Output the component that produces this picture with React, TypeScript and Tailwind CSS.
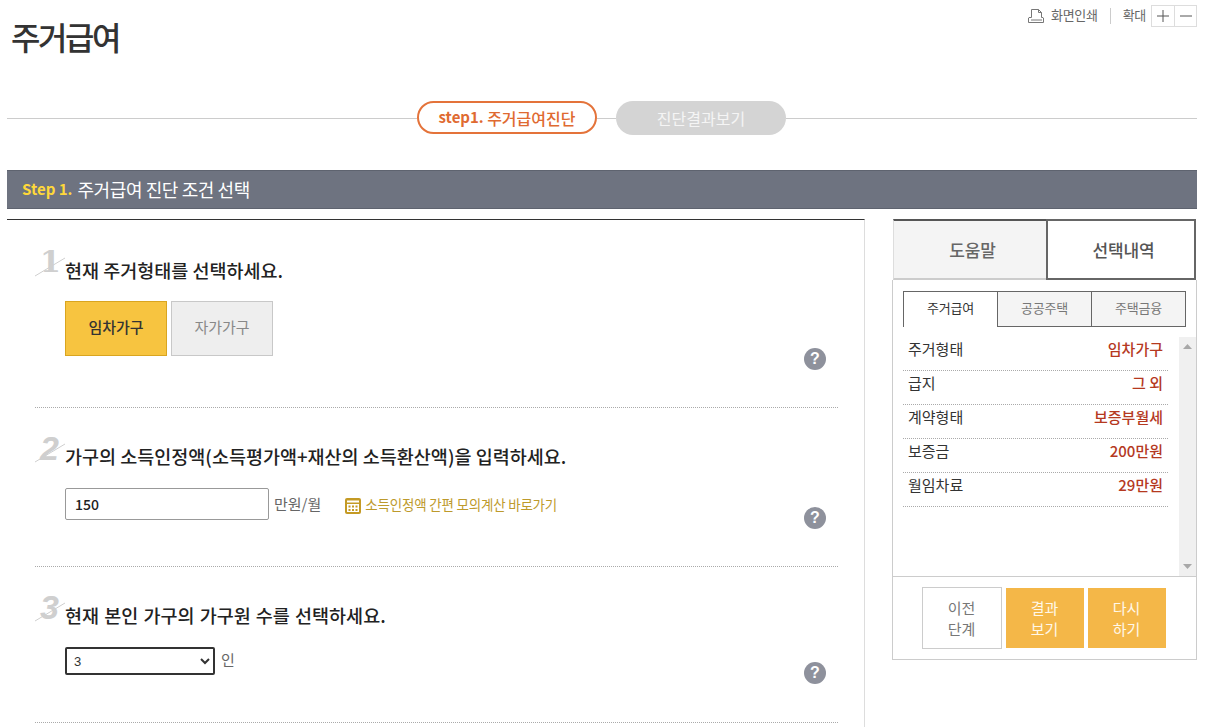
import React from 'react';

const FONT = '"Noto Sans CJK KR", "Noto Sans", sans-serif';

const HelpIcon = () => (
    <div className="w-[22px] h-[22px] rounded-full bg-[#8e919c] text-white flex items-center justify-center text-[16px] font-bold leading-none shrink-0 font-['Liberation_Sans']">
        ?
    </div>
);

const PrintIcon = () => (
    <svg width="17" height="16" viewBox="0 0 17 16" fill="none" stroke="#777" strokeWidth="1">
        <path d="M3.5 9.5V1.5H10.5L13.5 4.5V9.5" />
        <path d="M10.5 1.5V4.5H13.5" />
        <path d="M3.5 9.5H1L0.5 10V14.5H15.5V10L15 9.5H13.5" />
        <path d="M3 12H14" />
    </svg>
);

const CalcIcon = () => (
    <svg className="mt-[3px]" width="16" height="16" viewBox="0 0 16 16">
        <rect x="0" y="0" width="16" height="16" rx="2" fill="#c49a24" />
        <rect x="2" y="2.5" width="12" height="2" fill="#fff" />
        <rect x="2" y="6" width="12" height="8" fill="#fff" />
        <path d="M3.5 7.5h2v2h-2zM7 7.5h2v2H7zM10.5 7.5h2v2h-2zM3.5 11h2v2h-2zM7 11h2v2H7zM10.5 11h2v2h-2z" fill="#c49a24" />
    </svg>
);

const StepNo = ({ n, font }: { n: string; font: string }) => (
    <div className="absolute left-0 top-[-10px] w-[32px] h-[34px]">
        <span className={`absolute left-[5px] top-[-4px] leading-[38px] font-bold text-[#cfcfcf] ${font}`}>{n}</span>
        <svg className="absolute left-0 top-0" width="32" height="34" viewBox="0 0 32 34">
            <path d="M0 29L30 11" stroke="#cfcfcf" strokeWidth="1" />
        </svg>
    </div>
);

const Section = ({
    n,
    font,
    title,
    top,
    bottom,
    helpGap,
    children,
}: {
    n: string;
    font: string;
    title: string;
    top: string;
    bottom: string;
    helpGap: string;
    children: React.ReactNode;
}) => (
    <div className={`ml-[28px] mr-[26px] border-b border-dotted border-[#aaa] flex items-end ${top}`}>
        <div className={`flex-1 min-w-0 self-start ${bottom}`}>
            <div className="relative pl-[30px] text-[18.5px] leading-[26px] font-medium text-[#222]">
                <StepNo n={n} font={font} />
                {title}
            </div>
            {children}
        </div>
        <div className={`mr-[12px] ${helpGap}`}>
            <HelpIcon />
        </div>
    </div>
);

const rows = [
    ['주거형태', '임차가구'],
    ['급지', '그 외'],
    ['계약형태', '보증부월세'],
    ['보증금', '200만원'],
    ['월임차료', '29만원'],
];

export default function App() {
    return (
        <div className="w-[1226px] h-[727px] overflow-hidden bg-white pl-[7px] pr-[29px]" style={{ fontFamily: FONT }}>
            {/* top utils */}
            <div className="h-[29px] flex justify-end items-start pt-[5px] text-[13px] text-[#666]">
                <div className="flex items-center h-[22px]">
                    <PrintIcon />
                    <span className="ml-[6px] tracking-[-0.3px] mt-[-2px]">화면인쇄</span>
                    <span className="w-px h-[16px] bg-[#ccc] mx-[12px]" />
                    <span className="tracking-[-0.3px] mt-[-2px]">확대</span>
                    <div className="ml-[5px] flex border border-[#ddd] h-[22px]">
                        <div className="w-[23px] flex items-center justify-center border-r border-[#ddd]">
                            <svg width="12" height="12" viewBox="0 0 12 12" stroke="#555"><path d="M0 6H12M6 0V12" /></svg>
                        </div>
                        <div className="w-[21px] flex items-center justify-center">
                            <svg width="12" height="12" viewBox="0 0 12 12" stroke="#555"><path d="M0 6H12" /></svg>
                        </div>
                    </div>
                </div>
            </div>

            <h1 className="pl-[4px] h-[72px] text-[32px] leading-[14px] font-medium text-[#333] tracking-[-2.4px]">주거급여</h1>

            {/* steps */}
            <div className="flex items-center h-[34px] mb-[35px]">
                <div className="w-[410px] h-px bg-[#ccc]" />
                <div className="w-[180px] h-[33px] mb-px rounded-full border-2 border-[#e4733a] text-[#df6a31] flex items-center justify-center text-[15px] font-bold">
                    step1.&nbsp;<span className="text-[16px] font-medium">주거급여진단</span>
                </div>
                <div className="w-[19px] h-px bg-[#ccc]" />
                <div className="w-[170px] h-[34px] rounded-full bg-[#d4d4d4] text-[#f5f5f5] flex items-center justify-center text-[16px]">
                    진단결과보기
                </div>
                <div className="flex-1 h-px bg-[#ccc]" />
            </div>

            {/* step bar */}
            <div className="h-[39px] bg-[#6e7380] border-t border-b border-[#5e636f] flex items-center pl-[15px] text-[18px] text-white tracking-[-0.4px]">
                <span className="text-[#ffd83a] text-[15px] font-bold tracking-normal mr-[5px]">Step 1.</span>
                주거급여 진단 조건 선택
            </div>

            <div className="flex mt-[10px] items-start">
                {/* left */}
                <div className="w-[859px] h-[520px] border-t border-t-[#333] border-r border-r-[#ddd]">
                    <Section n="1" font="text-[30px] font-['DejaVu_Serif']" title="현재 주거형태를 선택하세요." top="pt-[37px]" bottom="pb-[51px]" helpGap="mb-[37px]">
                        <div className="flex gap-[4px] pl-[30px] mt-[18px] text-[15px]">
                            <div className="w-[102px] h-[55px] bg-[#f7c440] border border-[#d9a520] text-[#333] font-medium flex items-center justify-center pb-[2px]">임차가구</div>
                            <div className="w-[102px] h-[55px] bg-[#eeeeee] border border-[#c8c8c8] text-[#888] flex items-center justify-center pb-[2px]">자가가구</div>
                        </div>
                    </Section>
                    <Section n="2" font="text-[34px] italic font-['Liberation_Sans']" title="가구의 소득인정액(소득평가액+재산의 소득환산액)을 입력하세요." top="pt-[35px]" bottom="pb-[46px]" helpGap="mb-[37px]">
                        <div className="flex items-center pl-[30px] mt-[19px]">
                            <input
                                readOnly
                                value="150"
                                className="w-[204px] h-[32px] border border-[#999] rounded-[2px] px-[9px] text-[14px] font-medium text-[#222]"
                            />
                            <span className="ml-[5px] text-[15px] text-[#666]">만원/월</span>
                            <span className="ml-[24px] flex items-center gap-[4px] text-[13.5px] text-[#bd9a2c] tracking-[-0.2px]">
                                <CalcIcon />
                                소득인정액 간편 모의계산 바로가기
                            </span>
                        </div>
                    </Section>
                    <Section n="3" font="text-[34px] italic font-['Liberation_Sans']" title="현재 본인 가구의 가구원 수를 선택하세요." top="pt-[35px] [word-spacing:1px]" bottom="pb-[47px]" helpGap="mb-[38px]">
                        <div className="flex items-center pl-[30px] mt-[19px]">
                            <select
                                defaultValue="3"
                                className="w-[150px] h-[28px] border-2 border-[#333] rounded-[2px] pl-[3px] text-[13px] text-[#333] font-['Liberation_Sans']"
                            >
                                <option value="3">3</option>
                            </select>
                            <span className="ml-[6px] text-[15px] text-[#666] mt-[-2px]">인</span>
                        </div>
                    </Section>
                </div>

                {/* right */}
                <div className="ml-[27px] w-[305px]">
                    <div className="flex h-[61px] text-[17px] tracking-[-0.2px]">
                        <div className="ml-px w-[153px] bg-[#f4f4f4] border-t-2 border-t-[#555] border-b-2 border-b-[#ccc] border-l border-l-[#ddd] text-[#666] flex items-center justify-center pl-[5px] font-medium">도움말</div>
                        <div className="w-[150px] bg-white border-2 border-[#666] text-[#555] flex items-center justify-center pl-[5px] font-medium">선택내역</div>
                    </div>
                    <div className="h-[380px] border border-[#ccc] border-t-0 flex flex-col">
                        <div className="px-[10px] pt-[11px]">
                            <div className="flex h-[36px] text-[13px] tracking-[-0.2px]">
                                <div className="w-[94px] bg-white border-t border-l border-[#666] text-[#333] flex items-center justify-center pb-[3px]">주거급여</div>
                                <div className="w-[95px] bg-[#f4f4f4] border border-[#666] text-[#777] flex items-center justify-center pb-[3px]">공공주택</div>
                                <div className="w-[94px] bg-[#f4f4f4] border border-l-0 border-[#666] text-[#777] flex items-center justify-center pb-[3px]">주택금융</div>
                            </div>
                        </div>
                        <div className="flex h-[240px] mt-[10px] border-b border-[#ccc] flex-none">
                            <div className="flex-1 pl-[10px] pr-[11px]">
                                {rows.map(([k, v]) => (
                                    <div key={k} className="h-[34px] pb-[9px] border-b border-dotted border-[#aaa] flex items-center justify-between px-[5px] text-[15px]">
                                        <span className="text-[#333]">{k}</span>
                                        <span className="text-[#b5391f] font-medium">{v}</span>
                                    </div>
                                ))}
                            </div>
                            <div className="w-[17px] bg-[#f0f0f0] flex flex-col items-center justify-between py-[7px]">
                                <svg width="9" height="5" viewBox="0 0 9 5"><path d="M4.5 0L9 5H0Z" fill="#a8a8a8" /></svg>
                                <svg width="9" height="5" viewBox="0 0 9 5"><path d="M0 0H9L4.5 5Z" fill="#a8a8a8" /></svg>
                            </div>
                        </div>
                        <div className="flex justify-center gap-[4px] pt-[10px] pr-[2px] text-[15px] leading-[21px] text-center">
                            <div className="w-[80px] h-[62px] border border-[#ccc] text-[#777] flex items-center justify-center">이전<br />단계</div>
                            <div className="w-[78px] h-[60px] mt-px bg-[#f4b748] text-[#fff8e8] flex items-center justify-center">결과<br />보기</div>
                            <div className="w-[78px] h-[60px] mt-px bg-[#f4b748] text-[#fff8e8] flex items-center justify-center">다시<br />하기</div>
                        </div>
                    </div>
                </div>
            </div>
        </div>
    );
}
